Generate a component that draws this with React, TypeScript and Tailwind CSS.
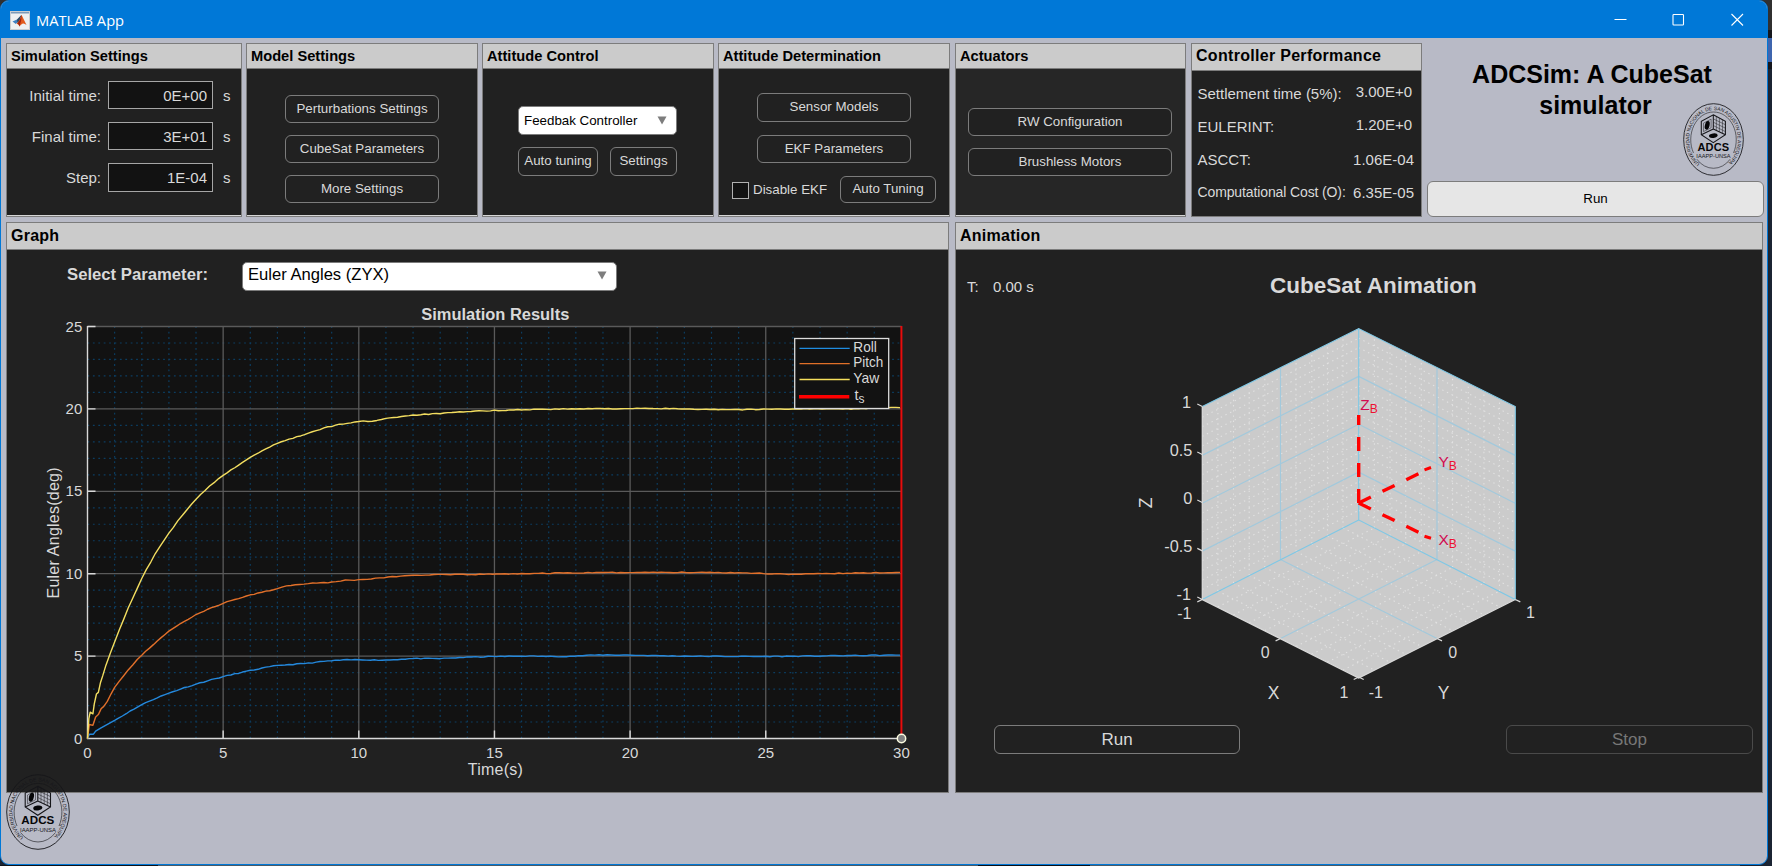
import type { ReactNode } from "react";

/* ---------- shared pieces ---------- */

function Panel({
  title,
  className,
  headClass = "h-[24px] text-[14.67px]",
  bodyClass = "",
  strip = true,
  children,
}: {
  title: string;
  className: string;
  headClass?: string;
  bodyClass?: string;
  strip?: boolean;
  children: ReactNode;
}) {
  return (
    <section className={`flex shrink-0 flex-col border border-[#7c7c7c] bg-[#212121] ${className}`}>
      <h2
        className={`box-content flex shrink-0 items-center whitespace-nowrap border-b border-[#7c7c7c] bg-[#cbcbcb] pl-[4px] font-bold leading-none text-black ${headClass}`}
      >
        {title}
      </h2>
      <div className={`min-h-0 flex-1 ${bodyClass}`}>{children}</div>
      {strip && <div className="h-px shrink-0 bg-[#d6d6d6]" />}
    </section>
  );
}

function Btn({ className, disabled = false, children }: { className: string; disabled?: boolean; children: ReactNode }) {
  return (
    <button
      disabled={disabled}
      className={`flex shrink-0 items-center justify-center whitespace-nowrap rounded-[6px] border bg-[#212121] pb-[1px] leading-none ${
        disabled ? "border-[#4a4a4a] text-[#777777]" : "border-[#7c7c7c] text-[#d9d9d9]"
      } ${className}`}
    >
      {children}
    </button>
  );
}

function Select({ className, children }: { className: string; children: ReactNode }) {
  return (
    <div
      className={`flex shrink-0 items-center justify-between whitespace-nowrap rounded-[5px] border border-[#7c7c7c] bg-white pl-[5px] leading-none text-black ${className}`}
    >
      <span>{children}</span>
      <svg width="10" height="9" viewBox="0 0 10 9">
        <path d="M0.5 0.5H9.5L5 8.5Z" fill="#7d7d7d" />
      </svg>
    </div>
  );
}

function TimeField({ label, value, tall }: { label: string; value: string; tall?: boolean }) {
  return (
    <div className="flex items-center text-[15px] leading-none text-[#d9d9d9]">
      <span className="w-[94px] whitespace-nowrap text-right">{label}</span>
      <div
        className={`ml-[7px] flex w-[105px] items-center justify-end border border-[#a6a6a6] bg-[#121212] pr-[5px] ${tall ? "h-[29px]" : "h-[28px]"}`}
      >
        {value}
      </div>
      <span className="ml-[10px]">s</span>
    </div>
  );
}

function Metric({ label, value, labelClass = "", valueClass = "" }: { label: string; value: string; labelClass?: string; valueClass?: string }) {
  return (
    <div className="flex h-[33px] items-center justify-between whitespace-nowrap pl-[5.5px] text-[15px] leading-none text-[#d9d9d9]">
      <span className={labelClass}>{label}</span>
      <span className={valueClass}>{value}</span>
    </div>
  );
}

function Seal({ className, id }: { className: string; id: string }) {
  return (
    <svg className={className} viewBox="0 0 64 76" preserveAspectRatio="none" fill="none" stroke="#16161a">
      <defs>
        <path id={id} d="M17.5 63.4A25.4 30.8 0 1 1 46.5 63.4" />
      </defs>
      <ellipse cx="32" cy="38" rx="31.3" ry="37.3" strokeWidth="0.9" />
      <path d="M11 52A23.6 28.8 0 0 1 32 9.4A23.6 28.8 0 0 1 53 52M14.500 58.500A23.6 28.800 0 0 0 49.500 58.500" strokeWidth="0.6" />
      <text fontSize="5.2" fill="#16161a" stroke="none" fontFamily="Liberation Sans, sans-serif">
        <textPath href={`#${id}`} textLength="143" lengthAdjust="spacingAndGlyphs">
          UNIVERSIDAD NACIONAL DE SAN AGUSTIN DE AREQUIPA
        </textPath>
      </text>
      <path d="M31.8 12.3L44.5 19V33L31.8 41.300L19.2 33V19ZM31.8 12.3V27M31.8 27L19.2 33M31.8 27L44.5 33" strokeWidth="1.1" />
      <path d="M35 14.2V28.5M38.2 16V30M41.4 17.6V31.4M31.8 16.5L44.5 22.6M31.8 20L44.5 26.2M31.8 23.5L44.5 29.8" strokeWidth="0.5" />
      <path d="M21.5 21L29.5 16.8V25.8L21.5 29.8Z" strokeWidth="0.5" />
      <ellipse cx="25.4" cy="23.2" rx="2.4" ry="4.6" transform="rotate(15 25.4 23.2)" fill="#060608" stroke="none" />
      <ellipse cx="31.8" cy="34" rx="4.6" ry="2.4" transform="rotate(-8 31.8 34)" fill="#060608" stroke="none" />
      <text x="31.8" y="50.4" textAnchor="middle" fontSize="11.6" fontWeight="700" fill="#060608" stroke="none" textLength="33" fontFamily="Liberation Sans, sans-serif">
        ADCS
      </text>
      <text x="32" y="57.6" textAnchor="middle" fontSize="5.2" fill="#16161a" stroke="none" textLength="36" lengthAdjust="spacingAndGlyphs" fontFamily="Liberation Sans, sans-serif">
        IAAPP-UNSA
      </text>
    </svg>
  );
}

/* ---------- results chart ---------- */

const X0 = 87.5;
const Y0 = 738.5;
const UX = 27.13;
const UY = 16.48;

type Pt = [number, number];

const YAW: Pt[] = [[0, 0], [0.05, 1.2], [0.1, 1.6], [0.2, 1.5], [0.25, 2.1], [0.33, 2.7], [0.4, 2.8], [0.48, 3.4], [0.56, 3.8], [0.68, 4.45], [1, 5.87], [1.5, 7.9], [2, 9.7], [2.5, 11.2], [3, 12.45], [3.5, 13.55], [4, 14.5], [4.5, 15.3], [5, 15.95], [6, 17.05], [7, 17.9], [8, 18.45], [9, 18.95], [10, 19.23], [10.5, 19.27], [11, 19.42], [12, 19.62], [13, 19.72], [14, 19.83], [15, 19.9], [16, 19.95], [18, 20], [21, 20.02], [24, 19.96], [26, 20], [28, 20], [29, 20.05], [29.95, 20.08]];
const PITCH: Pt[] = [[0, 0], [0.07, 0.85], [0.2, 0.8], [0.3, 1.3], [0.4, 1.45], [0.5, 1.8], [0.6, 1.95], [0.73, 2.25], [1, 3.1], [1.5, 4.15], [2, 5.05], [3, 6.5], [4, 7.5], [5, 8.2], [6, 8.7], [7, 9.1], [7.5, 9.3], [8.3, 9.43], [9, 9.48], [9.5, 9.6], [10, 9.63], [12, 9.9], [14, 9.95], [16, 10], [18, 10.05], [21, 10.08], [24, 10.06], [26, 9.97], [28, 10.03], [29.95, 10.08]];
const ROLL: Pt[] = [[0, 0], [0.07, 0.26], [0.22, 0.26], [0.3, 0.45], [0.5, 0.65], [1, 1.1], [2, 2.05], [3, 2.75], [4, 3.3], [5, 3.75], [6, 4.12], [7, 4.42], [8, 4.55], [9, 4.72], [10, 4.78], [11, 4.76], [12, 4.85], [13, 4.85], [14, 4.93], [16, 5], [17.5, 4.98], [19, 5.07], [22, 5], [25, 4.98], [28, 5.03], [29.95, 5.06]];

function trace(points: Pt[], seed: number) {
  const out: string[] = [];
  let s = seed;
  const noise = () => {
    s = (s * 16807) % 2147483647;
    return s / 2147483647 - 0.5;
  };
  for (let i = 0; i < points.length - 1; i++) {
    const p0 = points[Math.max(0, i - 1)];
    const p1 = points[i];
    const p2 = points[i + 1];
    const p3 = points[Math.min(points.length - 1, i + 2)];
    const h = p2[0] - p1[0];
    const m1 = p1[0] < 1 ? (p2[1] - p1[1]) / h : (p2[1] - p0[1]) / (p2[0] - p0[0]);
    const m2 = p2[0] < 1 ? (p2[1] - p1[1]) / h : (p3[1] - p1[1]) / (p3[0] - p1[0]);
    const n = Math.max(1, Math.round(h / 0.15));
    for (let k = 0; k < n; k++) {
      const t = k / n;
      const y =
        (2 * t ** 3 - 3 * t ** 2 + 1) * p1[1] +
        (t ** 3 - 2 * t ** 2 + t) * h * m1 +
        (-2 * t ** 3 + 3 * t ** 2) * p2[1] +
        (t ** 3 - t ** 2) * h * m2;
      const amp = p1[0] < 1 ? 0 : 0.05;
      out.push(`${(X0 + (p1[0] + t * h) * UX).toFixed(2)},${(Y0 - (y + noise() * amp) * UY).toFixed(2)}`);
    }
  }
  const last = points[points.length - 1];
  out.push(`${X0 + last[0] * UX},${Y0 - last[1] * UY}`);
  return out.join(" ");
}

const FONT = "Liberation Sans, Arial, sans-serif";

function ResultsChart() {
  const minorX = Array.from({ length: 30 }, (_, i) => i).filter((i) => i % 5);
  const minorY = Array.from({ length: 25 }, (_, i) => i).filter((i) => i % 5);
  const legend = [
    { y: 348.3, label: "Roll", w: 23.5, color: "#1f8ce0" },
    { y: 363.7, label: "Pitch", w: 30, color: "#e07028" },
    { y: 379.5, label: "Yaw", w: 26, color: "#f5df5c" },
  ];
  return (
    <svg className="block" width="941" height="496" viewBox="7 296 941 496" fontFamily={FONT} fill="#d9d9d9">
      <rect x={X0} y="326.5" width="814" height="412" fill="#121212" />
      <g stroke="#0c3d60" strokeWidth="1.2" strokeDasharray="1.8 3.6">
        {minorX.map((i) => (
          <path key={i} d={`M${X0 + i * UX} ${Y0}V326.5`} />
        ))}
        {minorY.map((i) => (
          <path key={i} d={`M${X0} ${Y0 - i * UY}H901.5`} />
        ))}
      </g>
      <g stroke="#5a5a5a" strokeWidth="1.3">
        {[5, 10, 15, 20, 25].map((i) => (
          <path key={i} d={`M${X0 + i * UX} ${Y0}V326.5M${X0} ${Y0 - i * UY}H901.5`} />
        ))}
      </g>
      <g stroke="#d9d9d9" strokeWidth="1.4">
        <path d="M87.5 326V739M87 738.5H902" />
        {[5, 10, 15, 20, 25].map((i) => (
          <path key={i} d={`M${X0 + i * UX} ${Y0}v-8M${X0} ${Y0 - i * UY}h8`} />
        ))}
      </g>
      <g fill="none" strokeWidth="1.4" strokeLinejoin="round">
        <polyline points={trace(ROLL, 11)} stroke="#2488dc" />
        <polyline points={trace(PITCH, 37)} stroke="#e2702a" />
        <polyline points={trace(YAW, 91)} stroke="#f3de60" />
      </g>
      <path d="M901.4 326V738" stroke="#e80c0c" strokeWidth="2" />
      <circle cx="901.5" cy="738.5" r="4.2" fill="#808080" stroke="#fbfbe0" strokeWidth="1.5" />

      <rect x="794.7" y="338.5" width="94" height="70" fill="#121212" stroke="#dcdcdc" strokeWidth="1.3" />
      <g fontSize="14.5">
        {legend.map((l) => (
          <g key={l.label}>
            <path d={`M799.5 ${l.y}H849.7`} stroke={l.color} strokeWidth="1.3" />
            <text x="853.3" y={l.y + 3.7} textLength={l.w} lengthAdjust="spacingAndGlyphs">
              {l.label}
            </text>
          </g>
        ))}
        <path d="M799 396.8H849.3" stroke="#f00" strokeWidth="3.4" />
        <text x="854.5" y="400">
          t<tspan fontSize="12" dy="2.5">s</tspan>
        </text>
      </g>

      <text x="495.3" y="319.8" textAnchor="middle" fontWeight="700" fontSize="16" textLength="148" lengthAdjust="spacingAndGlyphs">
        Simulation Results
      </text>
      <g fontSize="15">
        {[0, 5, 10, 15, 20, 25].map((i) => (
          <text key={i} x="82.3" y={Y0 - i * UY + 5} textAnchor="end">
            {i}
          </text>
        ))}
        {[0, 5, 10, 15, 20, 25, 30].map((i) => (
          <text key={i} x={X0 + i * UX} y="757.5" textAnchor="middle">
            {i}
          </text>
        ))}
      </g>
      <text x="495.3" y="774.5" textAnchor="middle" fontSize="16" textLength="55">
        Time(s)
      </text>
      <text transform="translate(59.3 533) rotate(-90)" textAnchor="middle" fontSize="16" textLength="131">
        Euler Angles(deg)
      </text>
    </svg>
  );
}

/* ---------- attitude scene ---------- */

const CX = 1358.7;
const CY = 520;
const HX = 78.25; // screen px per unit along the horizontal axes
const HY = 39.5;
const HZ = 95.7;

/** Projects a point of the [-1, 1] cube onto the drawing. */
function proj(x: number, y: number, z: number): Pt {
  return [CX + (x + 1) * HX - (1 - y) * HX, CY + (x + 1) * HY + (1 - y) * HY - (z + 1) * HZ];
}

function seg(a: Pt, b: Pt) {
  return `M${a[0].toFixed(1)} ${a[1].toFixed(1)}L${b[0].toFixed(1)} ${b[1].toFixed(1)}`;
}

function Scene() {
  const fifths = [-0.8, -0.6, -0.4, -0.2, 0.2, 0.4, 0.6, 0.8];
  const tenths = Array.from({ length: 19 }, (_, i) => (i - 9) / 10).filter((v) => Math.round(v * 10) % 5 !== 0);
  const minor: string[] = [];
  fifths.forEach((v) => {
    minor.push(seg(proj(v, 1, -1), proj(v, 1, 1)));
    minor.push(seg(proj(-1, v, -1), proj(-1, v, 1)));
    minor.push(seg(proj(v, -1, -1), proj(v, 1, -1)));
    minor.push(seg(proj(-1, v, -1), proj(1, v, -1)));
  });
  tenths.forEach((z) => {
    minor.push(seg(proj(-1, -1, z), proj(-1, 1, z)));
    minor.push(seg(proj(-1, 1, z), proj(1, 1, z)));
  });
  const major: string[] = [];
  [-0.5, 0, 0.5].forEach((z) => {
    major.push(seg(proj(-1, -1, z), proj(-1, 1, z)));
    major.push(seg(proj(-1, 1, z), proj(1, 1, z)));
  });
  major.push(seg(proj(0, 1, -1), proj(0, 1, 1)), seg(proj(-1, 0, -1), proj(-1, 0, 1)));
  major.push(seg(proj(0, -1, -1), proj(0, 1, -1)), seg(proj(-1, 0, -1), proj(1, 0, -1)));

  const zLabels: [string, number, number][] = [["1", 1191, 402.3], ["0.5", 1192.3, 450.5], ["0", 1192.3, 498.5], ["-0.5", 1192.3, 546.5], ["-1", 1191, 594.5]];
  return (
    <svg className="block" width="806" height="403" viewBox="956 322 806 403" fontFamily={FONT} fill="#d9d9d9">
      <path d="M1358.7 328.6L1515.3 406.5V599.5L1358.7 678L1202.3 599.5V406.5Z" fill="#cbcbcb" />
      <path d={minor.join("")} stroke="#e2e2e2" strokeWidth="1.1" strokeDasharray="1.4 3.8" fill="none" />
      <path d={major.join("")} stroke="#a2c9dc" strokeWidth="1.2" fill="none" />
      <path
        d="M1202.3 406.5L1358.7 328.6L1515.3 406.5V599.5L1358.7 520V328.6M1358.7 520L1202.3 599.5"
        stroke="#7ec8e6"
        strokeWidth="1.1"
        fill="none"
      />
      <path d="M1202.3 406.5V599.5L1358.7 678L1515.3 599.5" stroke="#d9d9d9" strokeWidth="1.3" fill="none" />
      <path
        d="M1202.3 406.5l-5-2.5M1202.3 454.5l-5-2.5M1202.3 502.5l-5-2.5M1202.3 550.8l-5-2.5M1202.3 599.5l-5-2.5M1202.3 599.5l-5 2.3M1280.6 638.5l-5 2.3M1358.7 677l-5 2.5M1358.7 677l5 2.5M1437 638.5l5 2.3M1515.3 599.5l5 2.3"
        stroke="#d9d9d9"
        strokeWidth="1.3"
      />

      <g stroke="#f00" strokeWidth="3.4">
        <path d="M1358.7 503V415" strokeDasharray="14 12" />
        <path d="M1358.7 503L1423 471.5" strokeDasharray="13.5 13" />
        <path d="M1358.7 503L1423 534.5" strokeDasharray="13.5 13" />
        <path d="M1424.5 469.8L1431 467.5M1424.5 536.2L1431 538.2" strokeWidth="3" />
      </g>
      <g fontSize="15.5" fill="#d20a50">
        <text x="1360.3" y="410">Z<tspan fontSize="12" dy="3" fill="#ee1030">B</tspan></text>
        <text x="1438.5" y="466.7">Y<tspan fontSize="12" dy="3" fill="#ee1030">B</tspan></text>
        <text x="1438.5" y="544.7">X<tspan fontSize="12" dy="3" fill="#ee1030">B</tspan></text>
      </g>

      <g fontSize="16.3">
        {zLabels.map(([t, x, y]) => (
          <text key={t} x={x} y={y + 5.4} textAnchor="end">
            {t}
          </text>
        ))}
      </g>
      <g fontSize="16">
        <text x="1191.5" y="618.5" textAnchor="end">-1</text>
        <text x="1265.3" y="658" textAnchor="middle">0</text>
        <text x="1344" y="697.5" textAnchor="middle">1</text>
        <text x="1375.8" y="697.5" textAnchor="middle">-1</text>
        <text x="1452.7" y="658" textAnchor="middle">0</text>
        <text x="1530.5" y="618.3" textAnchor="middle">1</text>
      </g>
      <g fontSize="17.5" textAnchor="middle">
        <text x="1273.7" y="699.2">X</text>
        <text x="1443.7" y="699.2">Y</text>
        <text transform="translate(1152.3 503) rotate(-90)">Z</text>
      </g>
    </svg>
  );
}

/* ---------- window ---------- */

export default function App() {
  return (
    <div
      className="flex h-[866px] w-[1772px] flex-col overflow-hidden bg-[#1b2330] text-[#d9d9d9]"
      style={{ fontFamily: '"Liberation Sans", Arial, sans-serif' }}
    >
      <div className="flex h-[865px] bg-[linear-gradient(to_bottom,#303030_0px,#303030_30px,#15171d_30px,#15171d_38px,#3f65ae_38px,#3f65ae_62px,#15171d_62px,#15171d_69px,#1b2433_69px)]">
        <div className="relative flex h-[865px] w-[1768px] flex-col overflow-hidden rounded-[9px] border border-[#0078d7] bg-[#b8bac6]">
          <header className="flex h-[37px] shrink-0 items-center bg-[#0078d7] text-white">
            <svg className="mt-px ml-[9px]" width="20" height="19" viewBox="0 0 20 19">
              <rect x="0.5" y="0.5" width="19" height="18" fill="#eef0f2" stroke="#c9ccd0" />
              <path d="M1 1H19V2.5H1Z" fill="#7d9ab8" />
              <path d="M2.5 10.5L7 8.5L9 10L5.8 13Z" fill="#3f7fc0" />
              <path d="M7 8.5Q9.5 6 11.5 3.8L9.5 10.5L7.5 12Z" fill="#2b4a68" />
              <path d="M11.5 3.8Q13.5 8 16.5 14Q14 11.8 12.3 12.8Q10.5 14 9.5 15.5Q8.5 12.5 6.5 12.7Q10 10 11.5 3.8Z" fill="#e2591c" />
              <path d="M11.5 3.8Q12 9 9.5 15.5Q8.8 13 7.5 12.5Q10.5 9.5 11.5 3.8Z" fill="#a1220f" />
            </svg>
            <span className="ml-[6px] mt-px font-['Open_Sans'] text-[14.7px] leading-none">MATLAB App</span>
            <svg className="ml-auto mr-[23px]" width="130" height="14" viewBox="0 0 130 14" fill="none" stroke="#fff" strokeWidth="1.1">
              <path d="M0.5 6.5H12.5" />
              <rect x="59" y="1.5" width="10.5" height="10.5" rx="0.8" />
              <path d="M117.5 1L129 12.5M129 1L117.5 12.5" />
            </svg>
          </header>

          <div className="flex h-[184px] shrink-0 items-start pt-[5px] pl-[5px]">
            <Panel title="Simulation Settings" className="h-[174px] w-[236px]" bodyClass="flex flex-col gap-[13px] pt-[12px]">
              <TimeField label="Initial time:" value="0E+00" />
              <TimeField label="Final time:" value="3E+01" />
              <TimeField label="Step:" value="1E-04" tall />
            </Panel>

            <Panel title="Model Settings" className="ml-[4px] h-[174px] w-[232px]" bodyClass="flex flex-col gap-[12px] pl-[38px] pt-[26px]">
              <Btn className="h-[28px] w-[154px] text-[13.33px]">Perturbations Settings</Btn>
              <Btn className="h-[28px] w-[154px] text-[13.33px]">CubeSat Parameters</Btn>
              <Btn className="h-[28px] w-[154px] text-[13.33px]">More Settings</Btn>
            </Panel>

            <Panel title="Attitude Control" className="ml-[4px] h-[174px] w-[232px]" bodyClass="flex flex-col gap-[12px] pl-[35px] pt-[37px]">
              <Select className="h-[29px] w-[159px] pr-[9px] text-[13.33px]">Feedbak Controller</Select>
              <div className="flex w-[159px] justify-between">
                <Btn className="h-[29px] w-[80px] text-[13.33px]">Auto tuning</Btn>
                <Btn className="h-[29px] w-[67px] text-[13.33px]">Settings</Btn>
              </div>
            </Panel>

            <Panel title="Attitude Determination" className="ml-[4px] h-[174px] w-[232px]" bodyClass="flex flex-col pl-[13px] pt-[24px]">
              <Btn className="ml-[25px] h-[29px] w-[154px] text-[13.33px]">Sensor Models</Btn>
              <Btn className="ml-[25px] mt-[13px] h-[28px] w-[154px] text-[13.33px]">EKF Parameters</Btn>
              <div className="mt-[13px] flex items-center">
                <span className="mt-px h-[17px] w-[17px] border border-[#b0b0b0] bg-[#121212]" />
                <span className="ml-[4px] w-[87px] whitespace-nowrap text-[13.33px] leading-none">Disable EKF</span>
                <Btn className="h-[27px] w-[96px] text-[13.33px]">Auto Tuning</Btn>
              </div>
            </Panel>

            <Panel title="Actuators" className="ml-[5px] h-[174px] w-[231px]" bodyClass="flex flex-col gap-[12px] bg-[#262626] pl-[12px] pt-[39px]">
              <Btn className="h-[28px] w-[204px] text-[13.33px]">RW Configuration</Btn>
              <Btn className="h-[28px] w-[204px] text-[13.33px]">Brushless Motors</Btn>
            </Panel>

            <Panel
              title="Controller Performance"
              className="ml-[5px] h-[174px] w-[231px]"
              headClass="h-[24px] pb-[2px] text-[16px] tracking-[0.3px]"
              bodyClass="flex flex-col pt-[6px]"
              strip={false}
            >
              <Metric label="Settlement time (5%):" value="3.00E+0" valueClass="pr-[9px] pb-[4px]" />
              <Metric label="EULERINT:" value="1.20E+0" valueClass="pr-[9px] pb-[4px]" />
              <Metric label="ASCCT:" value="1.06E-04" valueClass="pr-[7px]" />
              <Metric
                label="Computational Cost (O):"
                value="6.35E-05"
                labelClass="text-[14px] tracking-[-0.12px] pb-[2px]"
                valueClass="pr-[7px] pb-px"
              />
            </Panel>

            <div className="ml-[5px] flex h-[174px] w-[337px] flex-col">
              <div className="relative h-[138px] pt-[16px]">
                <h1 className="pr-[7px] text-center text-[25px] font-bold leading-[31px] text-black">
                  ADCSim: A CubeSat
                  <br />
                  <span className="pl-[7px]">simulator</span>
                </h1>
                <Seal id="seal-top" className="absolute left-[256px] top-[60px] h-[73px] w-[61px]" />
              </div>
              <button className="h-[36px] rounded-[6px] border border-[#7c7c7c] bg-[#e6e6e6] pb-px text-[13.33px] leading-none text-black">
                Run
              </button>
            </div>
          </div>

          <div className="flex h-[571px] shrink-0 pl-[5px]">
            <Panel
              title="Graph"
              className="w-[943px]"
              headClass="h-[25px] pb-px text-[16px] tracking-[0.25px]"
              strip={false}
            >
              <div className="flex h-[46px] items-start pt-[12px] pl-[60px]">
                <span className="w-[175px] pt-[5px] text-[16.7px] font-bold leading-none">Select Parameter:</span>
                <Select className="h-[29px] w-[375px] pr-[9px] pb-[2px] text-[16.6px]">Euler Angles (ZYX)</Select>
              </div>
              <ResultsChart />
            </Panel>

            <Panel
              title="Animation"
              className="ml-[6px] w-[808px]"
              headClass="h-[25px] pb-px text-[16px] tracking-[0.25px]"
              strip={false}
            >
              <div className="grid h-[72px] grid-cols-[26px_90px_1fr] items-center pl-[11px] text-[15px] leading-none">
                <span>T:</span>
                <span>0.00 s</span>
                <span className="whitespace-nowrap pl-[187px] text-[22.5px] font-bold">CubeSat Animation</span>
              </div>
              <Scene />
              <div className="flex h-[29px] justify-between pl-[38px] pr-[9px]">
                <Btn className="w-[246px] text-[17px]">Run</Btn>
                <Btn className="w-[247px] text-[17px]" disabled>
                  Stop
                </Btn>
              </div>
            </Panel>
          </div>

          <Seal id="seal-bottom" className="absolute left-[5px] top-[773px] h-[76px] w-[64px]" />
        </div>
      </div>
      <div className="h-px bg-[linear-gradient(to_right,#101318_0px,#101318_158px,#4a5a66_158px,#4a5a66_978px,#0c1016_978px,#0c1016_1090px,#4a5a66_1090px,#4a5a66_1740px,#1b2330_1740px)]" />
    </div>
  );
}
